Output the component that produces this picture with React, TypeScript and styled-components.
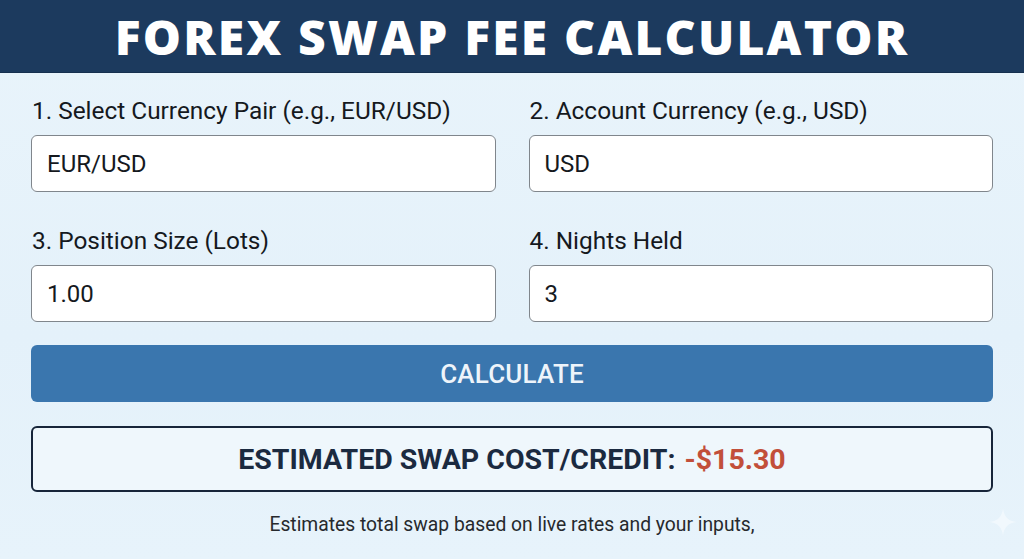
import styled, { createGlobalStyle } from 'styled-components';

const GlobalStyle = createGlobalStyle`
  html, body {
    margin: 0;
    padding: 0;
  }

  body {
    font-family: Roboto, 'Liberation Sans', Arial, sans-serif;
    background: #e6f2fa;
  }
`;

const Page = styled.div`
  width: 1024px;
  height: 559px;
  overflow: hidden;
  position: relative;
  background: linear-gradient(180deg, #e9f4fb 0%, #e4f1fa 60%, #e7f3fb 100%);
`;

const Header = styled.header`
  height: 72px;
  background: #1c3a5e;
  display: flex;
  align-items: center;
  justify-content: center;
  border-bottom: 1px solid #16304f;
`;

const Title = styled.h1`
  margin: 0;
  font-family: 'Open Sans', 'Liberation Sans', sans-serif;
  font-weight: 800;
  font-size: 48px;
  letter-spacing: 2.2px;
  color: #ffffff;
  line-height: 1;
  padding-top: 2px;
`;

const Form = styled.main`
  padding: 24px 31px 0;
  display: flex;
  flex-direction: column;
`;

const FieldGrid = styled.div`
  display: grid;
  grid-template-columns: 1fr 1fr;
  column-gap: 33px;
  row-gap: 35px;
`;

const Field = styled.label`
  display: flex;
  flex-direction: column;
  gap: 10px;
`;

const FieldLabel = styled.span`
  font-size: 24.4px;
  line-height: 28px;
  color: #15191e;
  padding-left: 1px;
`;

const Input = styled.input`
  box-sizing: border-box;
  height: 57px;
  width: 100%;
  padding: 0 15px;
  border: 1px solid #80868c;
  border-radius: 6px;
  background: #ffffff;
  font-family: Roboto, 'Liberation Sans', sans-serif;
  font-size: 24px;
  color: #15191e;
  outline: none;
`;

const CalcButton = styled.button`
  margin-top: 23px;
  height: 57px;
  border: none;
  border-radius: 6px;
  background: #3a76ae;
  color: #eef4fa;
  font-family: Roboto, 'Liberation Sans', sans-serif;
  font-weight: 500;
  font-size: 26px;
  letter-spacing: 0.2px;
  cursor: pointer;
`;

const ResultBox = styled.div`
  margin-top: 24px;
  box-sizing: border-box;
  height: 66px;
  border: 2px solid #17253a;
  border-radius: 6px;
  background: #eff7fc;
  display: flex;
  align-items: center;
  justify-content: center;
  gap: 9px;
  font-size: 28.5px;
  font-weight: 700;
  color: #1b2a40;
`;

const Amount = styled.span<{ $negative?: boolean }>`
  color: ${(p) => (p.$negative ? '#c24f3a' : '#2e8b57')};
`;

const Note = styled.p`
  margin: 21px 0 0;
  text-align: center;
  font-size: 19.3px;
  color: #26292d;
`;

const Sparkle = styled.svg`
  position: absolute;
  right: 6px;
  bottom: 22px;
  opacity: 0.7;
`;

const fields = [
  { label: '1. Select Currency Pair (e.g., EUR/USD)', value: 'EUR/USD' },
  { label: '2. Account Currency (e.g., USD)', value: 'USD' },
  { label: '3. Position Size (Lots)', value: '1.00' },
  { label: '4. Nights Held', value: '3' },
];

export default function App() {
  return (
    <Page>
      <GlobalStyle />
      <Header>
        <Title>FOREX SWAP FEE CALCULATOR</Title>
      </Header>
      <Form>
        <FieldGrid>
          {fields.map((f) => (
            <Field key={f.label}>
              <FieldLabel>{f.label}</FieldLabel>
              <Input defaultValue={f.value} />
            </Field>
          ))}
        </FieldGrid>
        <CalcButton>CALCULATE</CalcButton>
        <ResultBox>
          <span>ESTIMATED SWAP COST/CREDIT:</span>
          <Amount $negative>-$15.30</Amount>
        </ResultBox>
        <Note>Estimates total swap based on live rates and your inputs,</Note>
      </Form>
      <Sparkle width="30" height="30" viewBox="0 0 30 30">
        <path d="M15 1 C16 10 20 14 29 15 C20 16 16 20 15 29 C14 20 10 16 1 15 C10 14 14 10 15 1 Z" fill="#f6fbff" />
      </Sparkle>
    </Page>
  );
}
